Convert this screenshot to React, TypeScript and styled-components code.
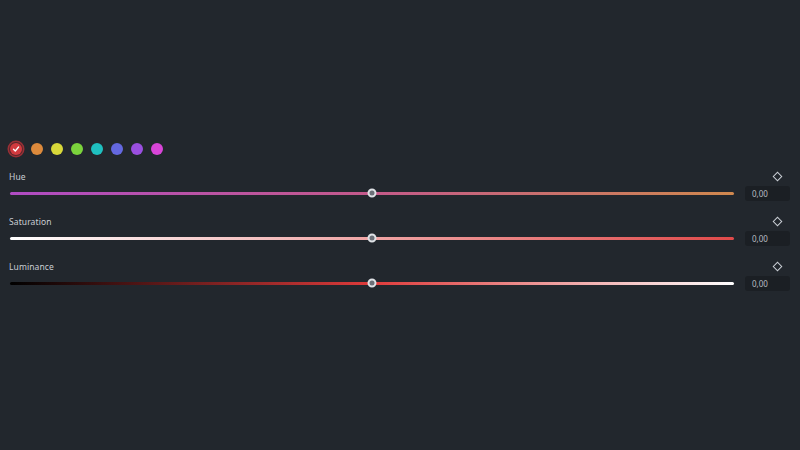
import styled, { createGlobalStyle } from "styled-components"

const Global = createGlobalStyle`
  html, body { margin: 0; padding: 0; background: #22272d; }
  body { font-family: "Noto Sans", "Open Sans", sans-serif; }
`

const Page = styled.div`
  width: 800px; height: 450px; background: #22272d;
  box-sizing: border-box; padding: 143px 10px 0 9px;
  display: flex; flex-direction: column;
`
const Swatches = styled.div`display: flex; align-items: center; gap: 8px; margin-bottom: 14px; padding-left: 1px;`
const Swatch = styled.div<{ $c: string; $sel?: boolean }>`
  width: 12px; height: 12px; border-radius: 50%; background: ${p => p.$c};
  display: flex; align-items: center; justify-content: center;
  ${p => p.$sel ? `box-shadow: 0 0 0 1px #5a262b, 0 0 0 2.5px #9a3036; margin-right: 1px;` : ""}
`
const Row = styled.div`display: flex; flex-direction: column; height: 45px;`
const LabelRow = styled.div`display: flex; align-items: center; justify-content: space-between; height: 14px;`
const Label = styled.span`font-size: 8.5px; color: #c9ced4; letter-spacing: 0.1px;`
const Diamond = styled.div`
  width: 5px; height: 5px; border: 1px solid #c9ced4; transform: rotate(45deg);
  margin-right: 9px;
`
const Control = styled.div`display: flex; align-items: center; gap: 11px; height: 16px; margin-top: 2px;`
const Track = styled.div<{ $bg: string }>`
  flex: 1; height: 3px; border-radius: 2px; background: ${p => p.$bg}; position: relative;
  margin-left: 1px;
`
const Thumb = styled.div`
  position: absolute; left: 50%; top: 50%; width: 5px; height: 5px; border-radius: 50%;
  background: #6b7078; border: 2px solid #dfe2e6; transform: translate(-50%, -50%);
`
const Value = styled.div`
  width: 45px; height: 15px; border-radius: 3px; background: #1b1f24;
  font-size: 8px; color: #b8bdc3; display: flex; align-items: center; padding-left: 7px; box-sizing: border-box;
`

const colors = ["#d23a3f", "#dd8a3c", "#d8d83a", "#7bd33c", "#1fc0c0", "#6468e0", "#9a4fe0", "#d845d8"]

const sliders = [
  { name: "Hue", bg: "linear-gradient(90deg, #b04cc4, #c45a8a 50%, #d0884e)" },
  { name: "Saturation", bg: "linear-gradient(90deg, #ffffff, #e04a4a 100%)" },
  { name: "Luminance", bg: "linear-gradient(90deg, #000000, #df3b3b 50%, #ffffff)" },
]

export default function App() {
  return (
    <>
      <Global />
      <Page>
        <Swatches>
          {colors.map((c, i) => (
            <Swatch key={c} $c={c} $sel={i === 0}>
              {i === 0 && (
                <svg width="8" height="8" viewBox="0 0 8 8">
                  <path d="M1.5 4.2 L3.3 6 L6.6 2" stroke="#fff" strokeWidth="1.3" fill="none" strokeLinecap="round" strokeLinejoin="round" />
                </svg>
              )}
            </Swatch>
          ))}
        </Swatches>
        {sliders.map(s => (
          <Row key={s.name}>
            <LabelRow>
              <Label>{s.name}</Label>
              <Diamond />
            </LabelRow>
            <Control>
              <Track $bg={s.bg}><Thumb /></Track>
              <Value>0,00</Value>
            </Control>
          </Row>
        ))}
      </Page>
    </>
  )
}
